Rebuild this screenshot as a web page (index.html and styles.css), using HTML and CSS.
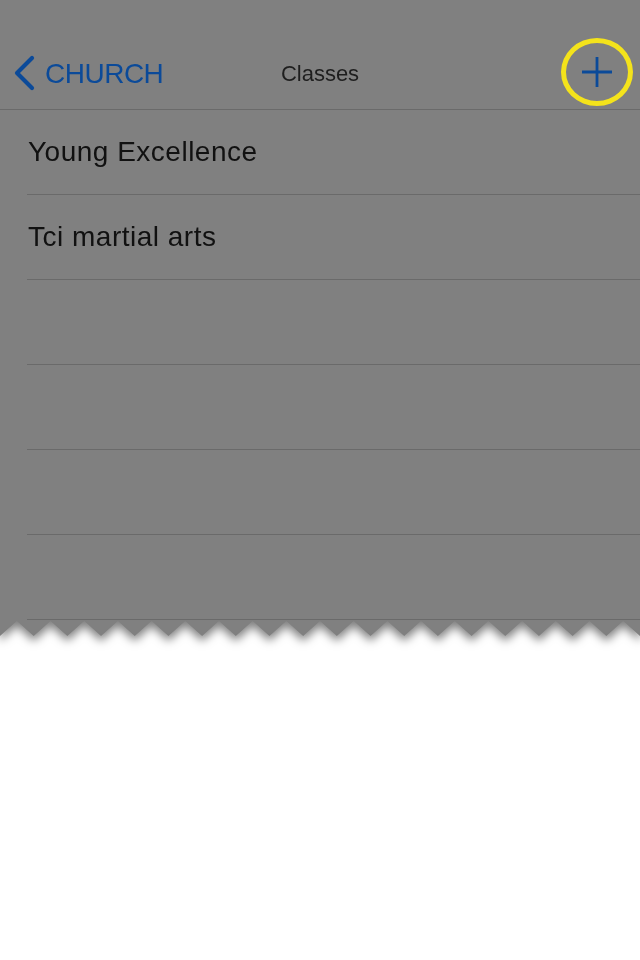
FILE: index.html
```html
<!DOCTYPE html>
<html lang="en">
<head>
<meta charset="utf-8">
<title>Classes</title>
<link rel="stylesheet" href="styles.css">
</head>
<body>
<div class="shot">
  <div class="app">
    <header class="nav">
      <a class="back" href="#">
        <svg class="chev" width="24" height="36" viewBox="0 0 24 36"><path d="M19 3 L4 18 L19 33" fill="none" stroke="#0b4a99" stroke-width="4.2" stroke-linecap="round" stroke-linejoin="round"/></svg>
        <span class="back-label">CHURCH</span>
      </a>
      <h1 class="title">Classes</h1>
      <div class="actions">
        <button class="add" type="button" aria-label="Add">
          <svg width="32" height="32" viewBox="0 0 32 32"><path d="M16 1 V31 M1 16 H31" stroke="#0b4a99" stroke-width="2.8" fill="none"/></svg>
        </button>
      </div>
    </header>
    <ul class="list">
      <li class="row">Young Excellence</li>
      <li class="row">Tci martial arts</li>
      <li class="row"></li>
      <li class="row"></li>
      <li class="row"></li>
      <li class="row"></li>
    </ul>
  </div>
</div>
</body>
</html>
```
FILE: styles.css
```css
html, body {
  margin: 0;
  padding: 0;
  background: #ffffff;
  width: 640px;
  height: 960px;
  overflow: hidden;
}

.shot {
  filter: drop-shadow(0 5px 5px rgba(0, 0, 0, 0.5));
}

.app {
  height: 636px;
  background: #808080;
  font-family: "Liberation Sans", Arial, sans-serif;
  clip-path: polygon(0 0, 640px 0, 640px 636px,
    623.16px 621px, 606.32px 636px, 589.47px 621px, 572.63px 636px,
    555.79px 621px, 538.95px 636px, 522.11px 621px, 505.26px 636px,
    488.42px 621px, 471.58px 636px, 454.74px 621px, 437.89px 636px,
    421.05px 621px, 404.21px 636px, 387.37px 621px, 370.53px 636px,
    353.68px 621px, 336.84px 636px, 320px 621px, 303.16px 636px,
    286.32px 621px, 269.47px 636px, 252.63px 621px, 235.79px 636px,
    218.95px 621px, 202.11px 636px, 185.26px 621px, 168.42px 636px,
    151.58px 621px, 134.74px 636px, 117.89px 621px, 101.05px 636px,
    84.21px 621px, 67.37px 636px, 50.53px 621px, 33.68px 636px,
    16.84px 621px, 0 636px);
}

.nav {
  box-sizing: border-box;
  height: 110px;
  padding-top: 36px;
  border-bottom: 1px solid #6a6a6a;
  display: grid;
  grid-template-columns: 1fr auto 1fr;
  align-items: center;
}

.back {
  display: flex;
  align-items: center;
  gap: 8px;
  padding-left: 13px;
  color: #0b4a99;
  text-decoration: none;
}

.chev {
  display: block;
  margin-top: 1px;
}

.back-label {
  font-size: 28px;
  line-height: 34px;
  margin-top: 2px;
  letter-spacing: -0.5px;
}

.title {
  margin: 0;
  margin-top: 3px;
  font-size: 22px;
  font-weight: normal;
  color: #1e1e1e;
  line-height: 28px;
}

.actions {
  display: flex;
  justify-content: flex-end;
  padding-right: 7px;
}

.add {
  box-sizing: border-box;
  width: 72px;
  height: 68px;
  border: 5px solid #f4e31b;
  border-radius: 50%;
  background: transparent;
  padding: 0;
  display: flex;
  align-items: center;
  justify-content: center;
  margin-top: -2px;
}

.add svg {
  display: block;
}

.list {
  list-style: none;
  margin: 0;
  padding: 0 0 0 27px;
}

.row {
  box-sizing: border-box;
  height: 85px;
  border-bottom: 1px solid #6a6a6a;
  display: flex;
  align-items: center;
  padding-left: 1px;
  font-size: 28px;
  letter-spacing: 0.5px;
  color: #111111;
}
```
